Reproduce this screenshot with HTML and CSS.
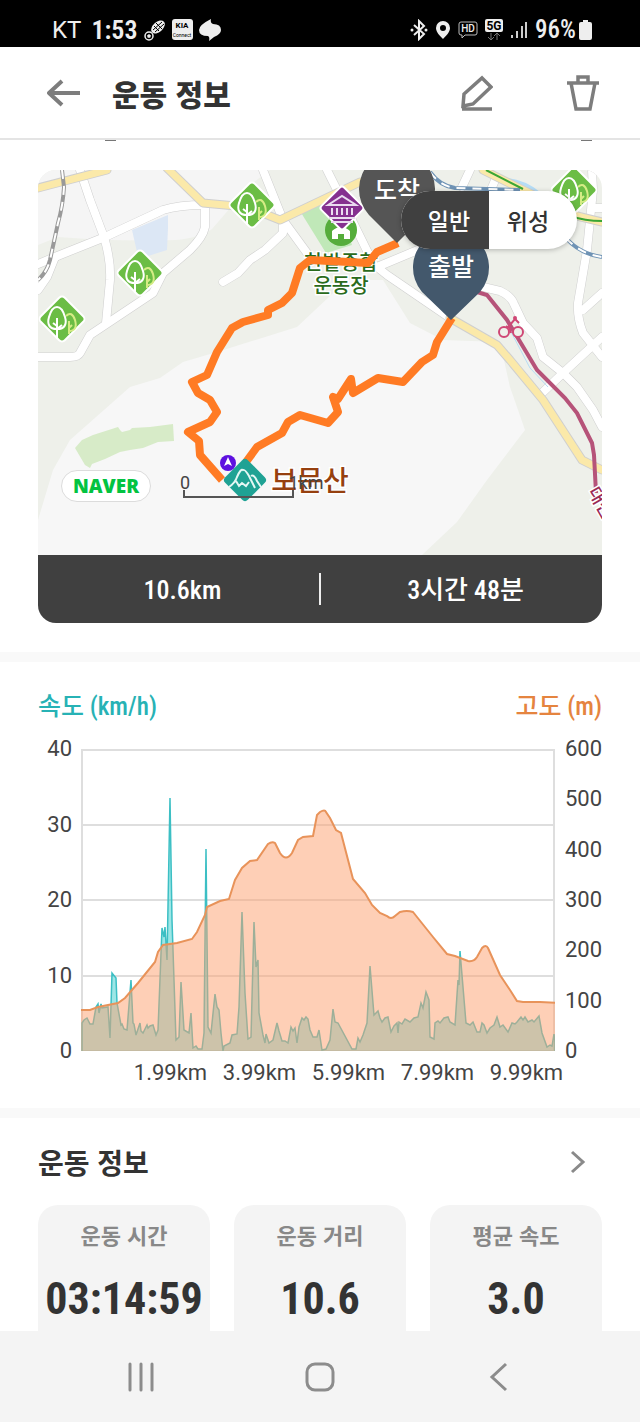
FILE: index.html
```html
<!DOCTYPE html>
<html lang="ko">
<head>
	<meta charset="UTF-8" />
	<meta name="viewport" content="width=device-width, initial-scale=1" />

	<title>운동 정보</title>

	<link rel="stylesheet" href="styles.css">
</head>
<body>
	<div class="status_bar">
		<div class="status_left">
			<span class="carrier">KT</span>
			<span class="clock">1:53</span>
			<svg width="22" height="22" viewBox="0 0 22 22">
				<ellipse cx="14" cy="8" rx="8" ry="5" transform="rotate(-42 14 8)" fill="#eee" />
				<path d="M9 11l9-8M11 13l9-8M12 4l6 6M10 7l5 5" stroke="#000" fill="none" />
				<circle cx="5" cy="17" r="4" fill="none" stroke="#eee" stroke-width="1.5" />
				<path d="M5 15l2 1.5-.8 2.200h-2.400L3 16.500z" fill="#eee" />
			</svg>
			<span class="app_badge"><b>KIA</b><small>Connect</small></span>
			<svg width="22" height="22" viewBox="0 0 22 22">
				<path d="M12 0q-1 4 2 5 8 0 8 6 0 4-7 7l-5 4q1-4-1-5-9 0-9-6Q0 6 12 0z" fill="#eee" />
			</svg>
		</div>
		<div class="status_right">
			<svg width="18" height="22" viewBox="0 0 18 22">
				<path d="M4 6l10 9-5 5V2l5 5-10 9" fill="none" stroke="#eee" stroke-width="2" />
				<circle cx="2" cy="11" r="1.500" fill="#eee" /><circle cx="16" cy="11" r="1.500" fill="#eee" />
			</svg>
			<svg width="16" height="20" viewBox="0 0 16 20">
				<path fill-rule="evenodd" d="M8 1a7 7 0 0 1 7 7c0 4-4 8-7 11-3-3-7-7-7-11a7 7 0 0 1 7-7zm0 4a3 3 0 1 0 0 6 3 3 0 0 0 0-6z" fill="#eee" />
			</svg>
			<svg width="20" height="20" viewBox="0 0 20 20">
				<path d="M3 2h14q2 0 2 2v9q0 2-2 2H7l-3 3v-3H3q-2 0-2-2V4q0-2 2-2z" fill="none" stroke="#bbb" />
				<text x="10" y="12" class="icon_text" fill="#eee">HD</text>
			</svg>
			<svg width="18" height="24" viewBox="0 0 18 24">
				<rect width="18" height="13" rx="2" y="1" fill="#eee" />
				<text x="9" y="12" class="icon_text g5" fill="#000">5G</text>
				<path d="M6 15v7M3 19l3 3 3-3M12 22v-7M9 18l3-3 3 3" stroke="#777" fill="none" />
			</svg>
			<svg width="18" height="18" viewBox="0 0 18 18">
				<path d="M2 14v3M7 10v7M12 5v12M16 1v16" stroke="#ccc" stroke-width="2" />
			</svg>
			<span class="battery">96%</span>
			<svg width="13" height="20" viewBox="0 0 13 20">
				<path d="M4 0h5v2h2q2 0 2 2v14q0 2-2 2H2q-2 0-2-2V4q0-2 2-2h2z" fill="#eee" />
			</svg>
		</div>
	</div>

	<header class="header">
		<button class="icon_btn" aria-label="뒤로">
			<svg width="34" height="28" viewBox="0 0 34 28"><path d="M15 2L2 14l13 12M2 14h31" fill="none" stroke="#7d7d7d" stroke-width="4" stroke-linejoin="round" /></svg>
		</button>
		<h1>운동 정보</h1>
		<button class="icon_btn" aria-label="수정">
			<svg width="32" height="36" viewBox="0 0 32 36"><path d="M21 3l9 9-18 17-10 2 1-12zM1 34h30" fill="none" stroke="#7d7d7d" stroke-width="3.500" /></svg>
		</button>
		<button class="icon_btn" aria-label="삭제">
			<svg width="32" height="36" viewBox="0 0 32 36"><path d="M0 8h32M4 8l5 26h14l5-26M11 8V2h10v6" fill="none" stroke="#7d7d7d" stroke-width="3.500" /></svg>
		</button>
	</header>

	<main>
		<div class="scrolled"><i></i><i></i></div>

		<section class="map_card">
			<div class="map">
				<svg class="map_img" viewBox="38 170 564 385">
					<defs>
						<g id="tree">
							<rect x="-17" y="-17" width="34" height="34" rx="4" transform="rotate(45)" fill="#6bbd45" stroke="#fff" stroke-width="2" />
							<path d="M-5 20V-1M-5 7l-4-3M-5 10l5-4M-5 10c-8 0-10-5-8-12 2-7 5-10 8-10s6 3 8 10c2 7 0 12-8 12" fill="none" stroke="#fff" stroke-width="2" />
							<path d="M7 15V2M7 9l3-3M4-3c4-4 7-2 9 4 2 7 0 11-6 11" fill="none" stroke="#d5ec85" stroke-width="2" />
						</g>
						<g id="roads">
							<path d="M38 264L55 257L105 237L163 210Q178 205 205 205V227Q203 237 190 250L163 273L153 293L120 315L90 335L80 353Q78 357 70 357H38" />
							<path d="M80 170L90 200L104 237Q111 260 110 280L106 323M55 257L47 277L38 290" />
							<path d="M263 170L283 220L310 257M283 220V233L265 250L250 260L238 273L223 282" />
							<path d="M327 170L347 210L375 267M425 247L377 267L387 275L450 318" />
							<path d="M483 287L500 291Q511 296 514 304L523 323L537 338L543 357L563 373L577 387L593 410L602 427" />
							<path d="M592 170L593 190L587 250L578 303Q577 318 583 333L602 357M602 293L583 310M540 395L563 373L602 337M470 170L462 187M496 178L490 192M592 208H602" />
						</g>
						<g id="main_roads">
							<path d="M38 188L107 170M167 168L203 203L247 207L280 220L360 182M450 318L497 345L510 360L543 400L582 460L602 470M483 170L523 190L577 216L602 222" />
						</g>
					</defs>

					<rect x="38" y="170" width="564" height="385" fill="#eef0ea" />
					<path d="M38 170H270L250 185L212 229Q200 238 175 240Q120 242 58 237L38 245z" fill="#f5f5f5" />
					<path d="M38 520L53 470L70 440L130 387L160 378L183 362L217 352L297 327L347 280H383L410 323L443 340L500 342L510 387L525 430L487 480L457 522L422 555H38z" fill="#f7f7f7" />
					<path d="M300 211L335 196L352 245L326 253z" fill="#c0e8b8" />
					<path d="M132 230L168 215V228L167 250L145 257L137 252z" fill="#dce7f5" />
					<path d="M75 448L82 440L93 435L118 427L120 430L122 432L130 430L132 428L150 427L173 424L174 441L158 442L143 448L130 450L120 452L105 459L92 464L90 468L85 465z" fill="#d7ebc8" />
					<path d="M507 178Q525 180 540 192H520z" fill="#b5dcf5" />

					<use href="#roads" class="road_edge" />
					<use href="#roads" class="road" />
					<use href="#main_roads" class="road_edge" />
					<use href="#main_roads" class="road main" />

					<path d="M62 170L64 187Q63 205 58 223L50 260Q47 272 38 280" class="rail" />
					<path d="M62 170L64 187Q63 205 58 223L50 260Q47 272 38 280" class="rail_dash" />
					<path d="M430 172Q440 186 455 188L520 190M566 238Q580 254 602 257" class="rail blue" />
					<path d="M430 172Q440 186 455 188L520 190M566 238Q580 254 602 257" class="rail_dash" />
					<path d="M486 170L523 189M570 216Q585 221 602 221" fill="none" stroke="#3ba634" stroke-width="2" />
					<path d="M510 330L530 368L548 387" fill="none" stroke="#b5dcf5" />
					<path d="M477 292L487 295L507 320L537 370L565 398L577 413L592 443L594 455L596 493" fill="none" stroke="#b65379" stroke-width="4" />
					<g fill="none" stroke="#cf4775" stroke-width="2">
						<circle cx="504" cy="332" r="5" fill="#eef0ea" /><circle cx="518" cy="332" r="5" fill="#eef0ea" />
						<path d="M511 333l-2-7 6-7 4 4M506 326l5 3" /><circle cx="515" cy="318" r="1" />
					</g>

					<circle cx="341" cy="230" r="16" fill="#55ad3b" />
					<path d="M332 239v-8q9-8 18 0v8h-6v-5h-6v5z" fill="#fff" />
					<text x="341" y="270" class="label green">한밭종합</text>
					<text x="341" y="293" class="label green">운동장</text>
					<text x="310" y="491" class="label brown">보문산</text>
					<text x="604" y="505" class="label pink" transform="rotate(60 599 498)">대전</text>

					<path class="route" d="M452 318L437 342L433 355L422 362L403 382L378 378L353 393L351 379L338 399L333 397L338 412L328 423L300 415L288 422L282 433L257 447L246 462M222 480L200 455L199 441L188 432L210 422L217 412L210 400L198 393L192 382L207 375L217 352L232 328L243 322L268 315V310L282 303L292 293L300 268L310 260L368 263L377 252L398 243" />

					<use href="#tree" x="252" y="205" />
					<use href="#tree" x="140" y="273" />
					<use href="#tree" x="62" y="319" />
					<use href="#tree" x="574" y="190" />

					<g transform="translate(342 208)">
						<rect x="-16" y="-16" width="32" height="32" rx="3" transform="rotate(45)" fill="#85308f" stroke="#fff" stroke-width="2" />
						<path d="M-14-3L0-12L14-3zM-10 0V7M-5 0V7M0 0V7M5 0V7M10 0V7M-13 10H13M-11 14H11" fill="none" stroke="#eadcf0" stroke-width="2" />
					</g>

					<g transform="translate(245 480)">
						<rect x="-16" y="-16" width="32" height="32" rx="4" transform="rotate(45)" fill="#1fa294" />
						<path d="M-16 7Q-10 3-8-3Q-4-12-2-10Q0-11 4-4L10 8M-9 1L-6 6L-3 3L1 6L4 2M6-4Q9-6 12 1L16 7" fill="none" stroke="#e4f7f4" stroke-width="2" />
					</g>
					<circle cx="228" cy="463" r="8" fill="#5d10e0" />
					<path d="M228 457l4 9-4-2-4 2z" fill="#fff" />

					<path d="M184 490v7h109v-7" fill="none" stroke="#555" stroke-width="2" />
					<text x="185" y="489" class="scale">0</text>
					<text x="306" y="489" class="scale">1km</text>

					<path d="M397 243L369 215A38 38 0 1 1 425 215z" fill="#555" />
					<text x="397" y="199" class="pin">도착</text>
					<path d="M451 320L422 292A38 38 0 1 1 480 292z" fill="#43586c" />
					<text x="451" y="276" class="pin">출발</text>
				</svg>

				<div class="map_type">
					<button class="on">일반</button>
					<button>위성</button>
				</div>
				<a class="naver" href="#">NAVER</a>
			</div>
			<div class="summary">
				<span>10.6km</span>
				<span>3시간 48분</span>
			</div>
		</section>

		<section class="chart_section">
			<div class="chart_title">
				<h2 class="speed">속도 (km/h)</h2>
				<h2 class="height">고도 (m)</h2>
			</div>
			<div class="chart">
				<div class="axis left"><span>40</span><span>30</span><span>20</span><span>10</span><span>0</span></div>
				<svg class="plot" viewBox="81 749 474 302" preserveAspectRatio="none">
					<path class="grid" d="M81 750H555M81 825H555M81 900H555M81 976H555M81 1051H555" />
					<path class="grid" d="M82 749V1051M554 749V1051" />
					<path class="speed_area" d="M82 1054V1023L84 1020L87 1018L90 1024L93 1024L96 1007L98 1004L99 1013L101 1004L102 1008L108 1007L110 1038L112 973L116 978L117 1003L121 1025L122 1024L124 1029L127 1030L131 980L133 1023L134 1024L136 1035L140 1023L141 1031L143 1033L147 1025L148 1028L150 1026L153 1025L156 1035L158 1030L162 928L164 937L165 927L167 960L170 798L172 920L176 1040L179 1037L181 982L184 1030L189 1033L191 1013L193 1048L196 1046L198 1049L202 1049L204 1033L206 849L208 1027L211 1033L215 994L217 1007L219 1010L221 1033L223 1051L224 1046L230 1043L232 1035L237 1034L239 1007L242 912L245 993L248 1039L251 1037L254 922L256 967L258 960L259 1013L263 1035L265 1043L266 1034L269 1043L273 1040L277 1023L279 1031L282 1041L285 1041L288 1043L291 1027L293 1031L295 1028L297 1043L299 1027L302 1018L304 1020L306 1017L308 1019L310 1030L313 1037L317 1037L319 1030L322 1050L326 1049L330 1040L333 1009L335 1022L338 1023L352 1049L356 1049L358 1038L360 1042L363 1035L367 1023L370 966L373 1003L374 1015L376 1013L378 1011L380 1018L382 1022L385 1018L388 1017L391 1032L394 1026L397 1023L398 1033L399 1022L402 1024L405 1019L410 1022L414 1018L418 1017L421 1003L423 1008L426 992L429 1000L430 1037L434 1039L435 1023L438 1021L440 1023L444 1018L448 1017L450 1022L455 1025L458 980L459 985L460 951L463 987L466 1023L470 1025L473 1022L477 1032L480 1032L482 1023L484 1025L487 1033L490 1028L494 1025L497 1017L500 1027L503 1025L508 1032L512 1023L515 1024L517 1022L521 1017L523 1020L525 1017L528 1022L532 1020L534 1022L539 1016L542 1033L547 1047L550 1045L552 1046L554 1034L555 1042V1054z" />
					<path class="height_area" d="M78 1054V1010L90 1010L98 1007L118 1003L125 998L138 983L155 962L158 952L163 945L177 943L192 939L197 932L205 915L207 907L220 901L229 899L235 880L242 868L250 861L257 860L268 844Q272 841 275 843L280 853Q286 862 292 853L298 840L303 837L313 836L317 815L320 812Q325 809 326 812L330 818L336 830L341 833L353 879L365 893L372 905L380 913L387 916Q391 920 395 916L400 912Q407 910 413 912L425 927L433 937L447 954L455 956L468 961Q474 962 477 957L482 948Q486 944 488 948L500 975L510 990L517 1001L523 1002L540 1002L558 1003V1054z" />
				</svg>
				<div class="axis right"><span>600</span><span>500</span><span>400</span><span>300</span><span>200</span><span>100</span><span>0</span></div>
			</div>
			<div class="axis_x"><span>1.99km</span><span>3.99km</span><span>5.99km</span><span>7.99km</span><span>9.99km</span></div>
		</section>

		<section class="info">
			<a class="info_title" href="#">
				<h2>운동 정보</h2>
				<svg width="16" height="24" viewBox="0 0 16 24"><path d="M2 2l11 10L2 22" fill="none" stroke="#8a8a8a" stroke-width="3" /></svg>
			</a>
			<div class="cards">
				<div class="card"><p>운동 시간</p><strong>03:14:59</strong></div>
				<div class="card"><p>운동 거리</p><strong>10.6</strong></div>
				<div class="card"><p>평균 속도</p><strong>3.0</strong></div>
			</div>
		</section>
	</main>

	<nav class="nav">
		<button aria-label="최근 앱"><svg width="30" height="30" viewBox="0 0 30 30"><path d="M4 2v26M15 2v26M26 2v26" stroke="#8c8c8c" stroke-width="3" stroke-linecap="round" /></svg></button>
		<button aria-label="홈"><svg width="30" height="30" viewBox="0 0 30 30"><rect x="2" y="2" width="26" height="26" rx="8" fill="none" stroke="#8c8c8c" stroke-width="3" /></svg></button>
		<button aria-label="이전"><svg width="30" height="30" viewBox="0 0 30 30"><path d="M22 2L8 15l14 13" fill="none" stroke="#8c8c8c" stroke-width="3" /></svg></button>
	</nav>
</body>
</html>
```
FILE: styles.css
```css
*{
	box-sizing: border-box;
}

body{
	margin: 0;
	background-color: #fff;
	color: #333;
	font-family: "Noto Sans CJK KR", sans-serif;
}

h1, h2, p{
	margin: 0;
}

button{
	border: 0;
	padding: 0;
	background: none;
	color: inherit;
	font-family: inherit;
}

a{
	color: inherit;
	text-decoration: none;
}

svg{
	display: block;
}

/* status bar */
.status_bar{
	display: flex;
	justify-content: space-between;
	height: 47px;
	padding: 12px 48px 0 52px;
	background-color: #000;
	color: #eee;
	font-family: Roboto, sans-serif;
	font-size: 24px;
	line-height: 34px;
}

.status_left, .status_right{
	display: flex;
	align-items: center;
	gap: 6px;
}

.carrier{
	font-weight: 400;
	margin-right: 4px;
}

.clock{
	font-family: "Roboto Condensed", Roboto, sans-serif;
	font-size: 26px;
	font-weight: 600;
}

.app_badge{
	width: 21px;
	height: 21px;
	border-radius: 3px;
	background-color: #eee;
	color: #000;
	text-align: center;
}

.app_badge b, .app_badge small{
	display: block;
	font-size: 8px;
	line-height: 8px;
	padding-top: 3px;
}

.app_badge small{
	font-size: 5px;
	line-height: 5px;
}

.icon_text{
	font: 500 10px Roboto, sans-serif;
	text-anchor: middle;
}

.g5{
	font-size: 12px;
	font-weight: 700;
}

.battery{
	font-family: "Roboto Condensed", "Noto Sans", sans-serif;
	font-size: 25px;
	font-weight: 500;
}

.status_right{
	gap: 7px;
}

.battery + svg{
	margin-left: -4px;
}

/* header */
.header{
	display: flex;
	align-items: center;
	height: 93px;
	padding: 0 41px 0 47px;
	border-bottom: 2px solid #e4e4e4;
}

.header h1{
	flex: 1;
	margin-left: 31px;
	font-size: 30px;
	line-height: 40px;
	font-weight: 900;
}

.header .icon_btn:last-child{
	margin-left: 74px;
}

/* end of the row that is scrolled under the header */
.scrolled{
	display: flex;
	justify-content: space-between;
	height: 30px;
	padding: 0 48px 0 105px;
}

.scrolled i{
	width: 11px;
	height: 1px;
	background-color: #777;
}

/* map */
.map_card{
	margin: 0 38px 29px;
	border-radius: 18px;
	overflow: hidden;
}

.map{
	position: relative;
}

.map_img{
	width: 100%;
}

.road_edge, .road, .rail, .rail_dash, .route{
	fill: none;
	stroke-linejoin: round;
}

.road_edge{
	stroke: #cfcfcf;
	stroke-width: 9;
	stroke-linecap: round;
}

.road{
	stroke: #fff;
	stroke-width: 8;
	stroke-linecap: round;
}

.main{
	stroke: #fbe9a9;
	stroke-width: 7;
}

.rail{
	stroke: #999;
	stroke-width: 4;
}

.blue{
	stroke: #6f93b5;
}

.rail_dash{
	stroke: #fff;
	stroke-width: 2;
	stroke-dasharray: 9 7;
}

.route{
	stroke: #ff7b24;
	stroke-width: 8;
}

.label{
	text-anchor: middle;
	stroke: #fff;
	stroke-width: 3px;
	paint-order: stroke;
	font-weight: 500;
}

.green{
	fill: #2a6b1c;
	font-size: 20px;
}

.brown{
	fill: #96400f;
	font-size: 28px;
}

.pink{
	fill: #9b2a55;
	font-size: 18px;
}

.scale{
	fill: #444;
	font: 18px Roboto, sans-serif;
	text-anchor: middle;
}

.pin{
	fill: #fff;
	font-size: 25px;
	font-weight: 500;
	text-anchor: middle;
}

.map_type{
	position: absolute;
	top: 21px;
	right: 25px;
	display: flex;
	border-radius: 29px;
	overflow: hidden;
	background-color: #fff;
	box-shadow: 0 1px 5px rgba(0, 0, 0, 0.25);
}

.map_type button{
	width: 88px;
	height: 58px;
	padding: 0 10px 0 0;
	font-size: 23px;
	font-weight: 500;
}

.map_type .on{
	padding: 0 0 0 8px;
	background-color: #404040;
	color: #fff;
}

.naver{
	position: absolute;
	left: 23px;
	bottom: 53px;
	width: 90px;
	border: 1px solid #dcdcdc;
	border-radius: 16px;
	background-color: #fff;
	color: #03c341;
	font: 800 19px/30px "Open Sans", sans-serif;
	text-align: center;
}

.summary{
	display: flex;
	align-items: center;
	height: 68px;
	background-color: #404040;
	color: #fff;
	font-family: "Roboto Condensed", "Noto Sans CJK KR", sans-serif;
	font-size: 26px;
	line-height: 30px;
	font-weight: 500;
}

.summary span{
	flex: 1;
	text-align: center;
	padding: 2px 0 0 8px;
}

.summary span + span{
	border-left: 2px solid #eee;
}

/* chart */
.chart_section{
	padding: 25px 38px 24px;
	border-top: 10px solid #f9f9f9;
	border-bottom: 10px solid #f9f9f9;
}

.chart_title{
	display: flex;
	justify-content: space-between;
}

.chart_title h2{
	font-family: "Roboto Condensed", "Noto Sans CJK KR", sans-serif;
	font-size: 25px;
	line-height: 40px;
	font-weight: 500;
}

.speed{
	color: #27b2b5;
}

.height{
	color: #e5843f;
}

.chart{
	display: flex;
	margin-top: 11px;
	color: #444;
	font-family: Roboto, sans-serif;
	font-size: 22px;
	line-height: 22px;
}

.axis{
	display: flex;
	flex-direction: column;
	justify-content: space-between;
}

.left{
	width: 43px;
	padding-right: 9px;
	text-align: right;
}

.right{
	width: 47px;
	padding-left: 10px;
}

.plot{
	flex: 1;
	min-width: 0;
	height: 302px;
	margin: 11px 0;
}

.grid{
	fill: none;
	stroke: #dedede;
	stroke-width: 2;
}

.speed_area{
	fill: rgba(60, 205, 205, 0.5);
	stroke: #3cbfc4;
	stroke-width: 1.5;
}

.height_area{
	fill: rgba(253, 160, 110, 0.5);
	stroke: #e8935a;
	stroke-width: 2;
}

.axis_x{
	display: grid;
	grid-template-columns: repeat(5, 1fr);
	padding: 0 31px 0 88px;
	color: #444;
	font-family: Roboto, sans-serif;
	font-size: 22px;
	line-height: 22px;
	text-align: center;
}

/* info */
.info{
	padding: 24px 38px 0;
}

.info_title{
	display: flex;
	justify-content: space-between;
	align-items: center;
	padding-right: 16px;
}

.info_title h2{
	font-size: 28px;
	line-height: 40px;
	font-weight: 700;
}

.cards{
	display: grid;
	grid-template-columns: repeat(3, minmax(0, 1fr));
	gap: 24px;
	margin-top: 23px;
}

.card{
	height: 126px;
	padding-top: 13px;
	border-radius: 20px 20px 0 0;
	background-color: #f4f4f4;
	text-align: center;
}

.card p{
	color: #888;
	font-size: 22px;
	line-height: 32px;
	font-weight: 700;
}

.card strong{
	display: block;
	margin-top: 21px;
	font-family: "Roboto Condensed", Roboto, sans-serif;
	font-size: 44px;
	line-height: 56px;
}

/* bottom navigation */
.nav{
	display: flex;
	height: 91px;
	padding: 0 51px;
	background-color: #f4f4f4;
}

.nav button{
	flex: 1;
	display: flex;
	justify-content: center;
	align-items: center;
}
```
